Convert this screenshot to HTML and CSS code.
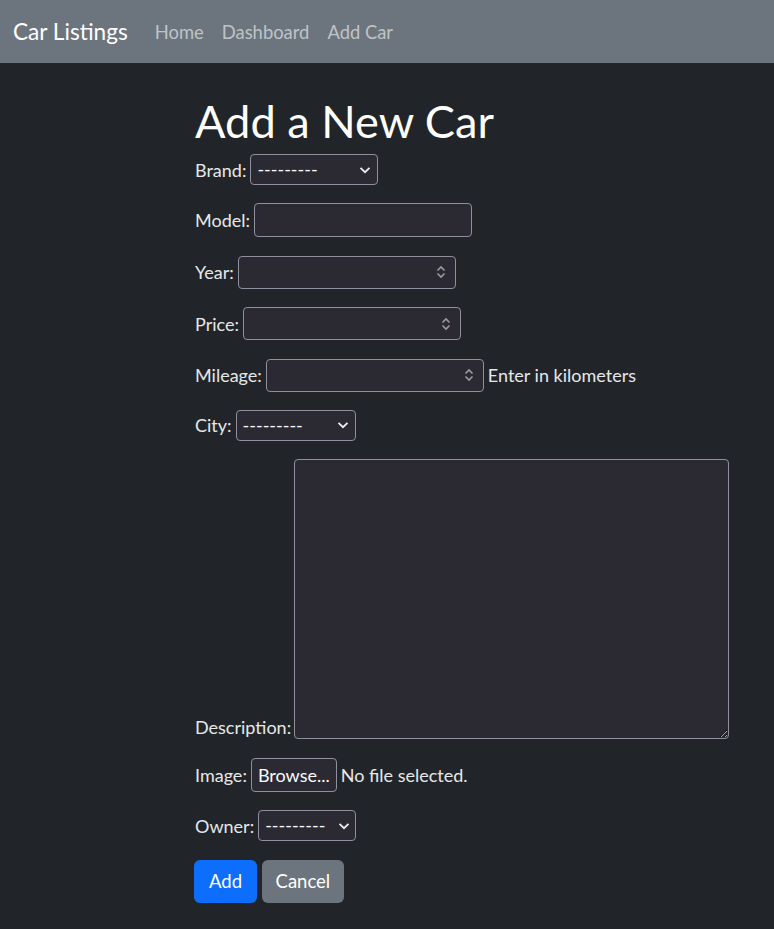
FILE: index.html
```html
<!DOCTYPE html>
<html lang="en">
<head>
<meta charset="utf-8">
<title>Add a New Car</title>
<link rel="stylesheet" href="styles.css">
</head>
<body>
<nav class="navbar">
  <a class="brand" href="#">Car Listings</a>
  <ul class="nav-links">
    <li><a href="#">Home</a></li>
    <li><a href="#">Dashboard</a></li>
    <li><a href="#">Add Car</a></li>
  </ul>
</nav>
<main class="content">
  <h1 class="title">Add a New Car</h1>
  <form class="car-form">
    <div class="row">
      <label for="brand">Brand:</label>
      <select id="brand" class="select select-brand"><option>---------</option></select>
    </div>
    <div class="row">
      <label for="model">Model:</label>
      <input id="model" class="text-input" type="text">
    </div>
    <div class="row">
      <label for="year">Year:</label>
      <input id="year" class="text-input number" type="number">
    </div>
    <div class="row">
      <label for="price">Price:</label>
      <input id="price" class="text-input number" type="number">
    </div>
    <div class="row">
      <label for="mileage">Mileage:</label>
      <input id="mileage" class="text-input number" type="number">
      <span class="help">Enter in kilometers</span>
    </div>
    <div class="row">
      <label for="city">City:</label>
      <select id="city" class="select select-city"><option>---------</option></select>
    </div>
    <div class="row row-bottom">
      <label for="description">Description:</label>
      <textarea id="description" class="textarea"></textarea>
    </div>
    <div class="row">
      <label for="image">Image:</label>
      <span class="file-btn">Browse...</span>
      <span class="file-name">No file selected.</span>
    </div>
    <div class="row">
      <label for="owner">Owner:</label>
      <select id="owner" class="select select-owner"><option>---------</option></select>
    </div>
    <div class="actions">
      <button type="button" class="btn btn-primary">Add</button>
      <button type="button" class="btn btn-secondary">Cancel</button>
    </div>
  </form>
</main>
</body>
</html>
```
FILE: styles.css
```css
* { box-sizing: border-box; }
html, body { margin: 0; padding: 0; }
body {
  background: #212529;
  color: #e6e8ea;
  font-family: Lato, "Open Sans", "Liberation Sans", sans-serif;
  font-size: 18px;
  min-height: 929px;
}
.navbar {
  display: flex;
  align-items: center;
  height: 63px;
  padding: 0 13px;
  background: #6c757d;
}
.brand {
  color: #fff;
  text-decoration: none;
  font-size: 22.6px;
  margin-right: 27px;
}
.nav-links {
  display: flex;
  gap: 18px;
  list-style: none;
  margin: 0;
  padding: 0;
}
.nav-links a {
  color: #bfc3c7;
  text-decoration: none;
  font-size: 18.4px;
}
.content {
  padding-left: 195px;
}
.title {
  margin: 0 0 3px;
  padding-top: 28px;
  font-size: 45.2px;
  font-weight: 400;
  line-height: 60px;
  color: #fff;
}
.car-form {
  display: flex;
  flex-direction: column;
  gap: 18.4px;
}
.row {
  display: flex;
  align-items: center;
  gap: 4px;
}
.row-bottom { align-items: flex-end; gap: 3px; }
.row-bottom label { padding-bottom: 1px; }
.select, .text-input, .textarea, .file-btn {
  background-color: #2b2a33;
  border: 1px solid #8f8f9d;
  border-radius: 4px;
  color: #fbfbfe;
  font-family: inherit;
  font-size: 18px;
}
.select {
  appearance: none;
  -webkit-appearance: none;
  height: 31px;
  padding: 0 28px 0 6px;
  line-height: 29px;
  background-image: url("data:image/svg+xml,%3Csvg xmlns='http://www.w3.org/2000/svg' width='12' height='8' viewBox='0 0 12 8'%3E%3Cpath d='M1.5 1.8l4.5 4.4 4.5-4.4' fill='none' stroke='%23ececf0' stroke-width='1.8'/%3E%3C/svg%3E");
  background-repeat: no-repeat;
  background-position: right 6px center;
}
.select-brand { width: 128px; }
.select-city { width: 120px; }
.select-owner { width: 98px; padding-right: 6px; background-position: right 5px center; }
.text-input {
  width: 218px;
  height: 34px;
  padding: 0 6px;
}
.number {
  -moz-appearance: textfield;
  height: 33px;
  background-image: url("data:image/svg+xml,%3Csvg xmlns='http://www.w3.org/2000/svg' width='10' height='16' viewBox='0 0 10 16'%3E%3Cpath d='M1.5 6.5l3.5-3.5 3.5 3.5M1.5 9.5l3.5 3.5 3.5-3.5' fill='none' stroke='%239a9aa6' stroke-width='1.6'/%3E%3C/svg%3E");
  background-repeat: no-repeat;
  background-position: right 9px center;
}
.number::-webkit-inner-spin-button,
.number::-webkit-outer-spin-button { -webkit-appearance: none; margin: 0; }
.textarea {
  width: 435px;
  height: 280px;
  resize: both;
  color-scheme: dark;
}
.file-btn {
  display: inline-flex;
  align-items: center;
  height: 34px;
  padding: 0 6px;
}
.actions {
  display: flex;
  gap: 5px;
  margin-left: -1px;
}
.btn {
  height: 43px;
  border: none;
  border-radius: 6px;
  color: #fff;
  font-family: inherit;
  font-size: 18.5px;
  padding: 0 15px;
}
.btn-primary { background: #0d6efd; }
.btn-secondary { background: #6c757d; padding: 0 13.5px; }
```
